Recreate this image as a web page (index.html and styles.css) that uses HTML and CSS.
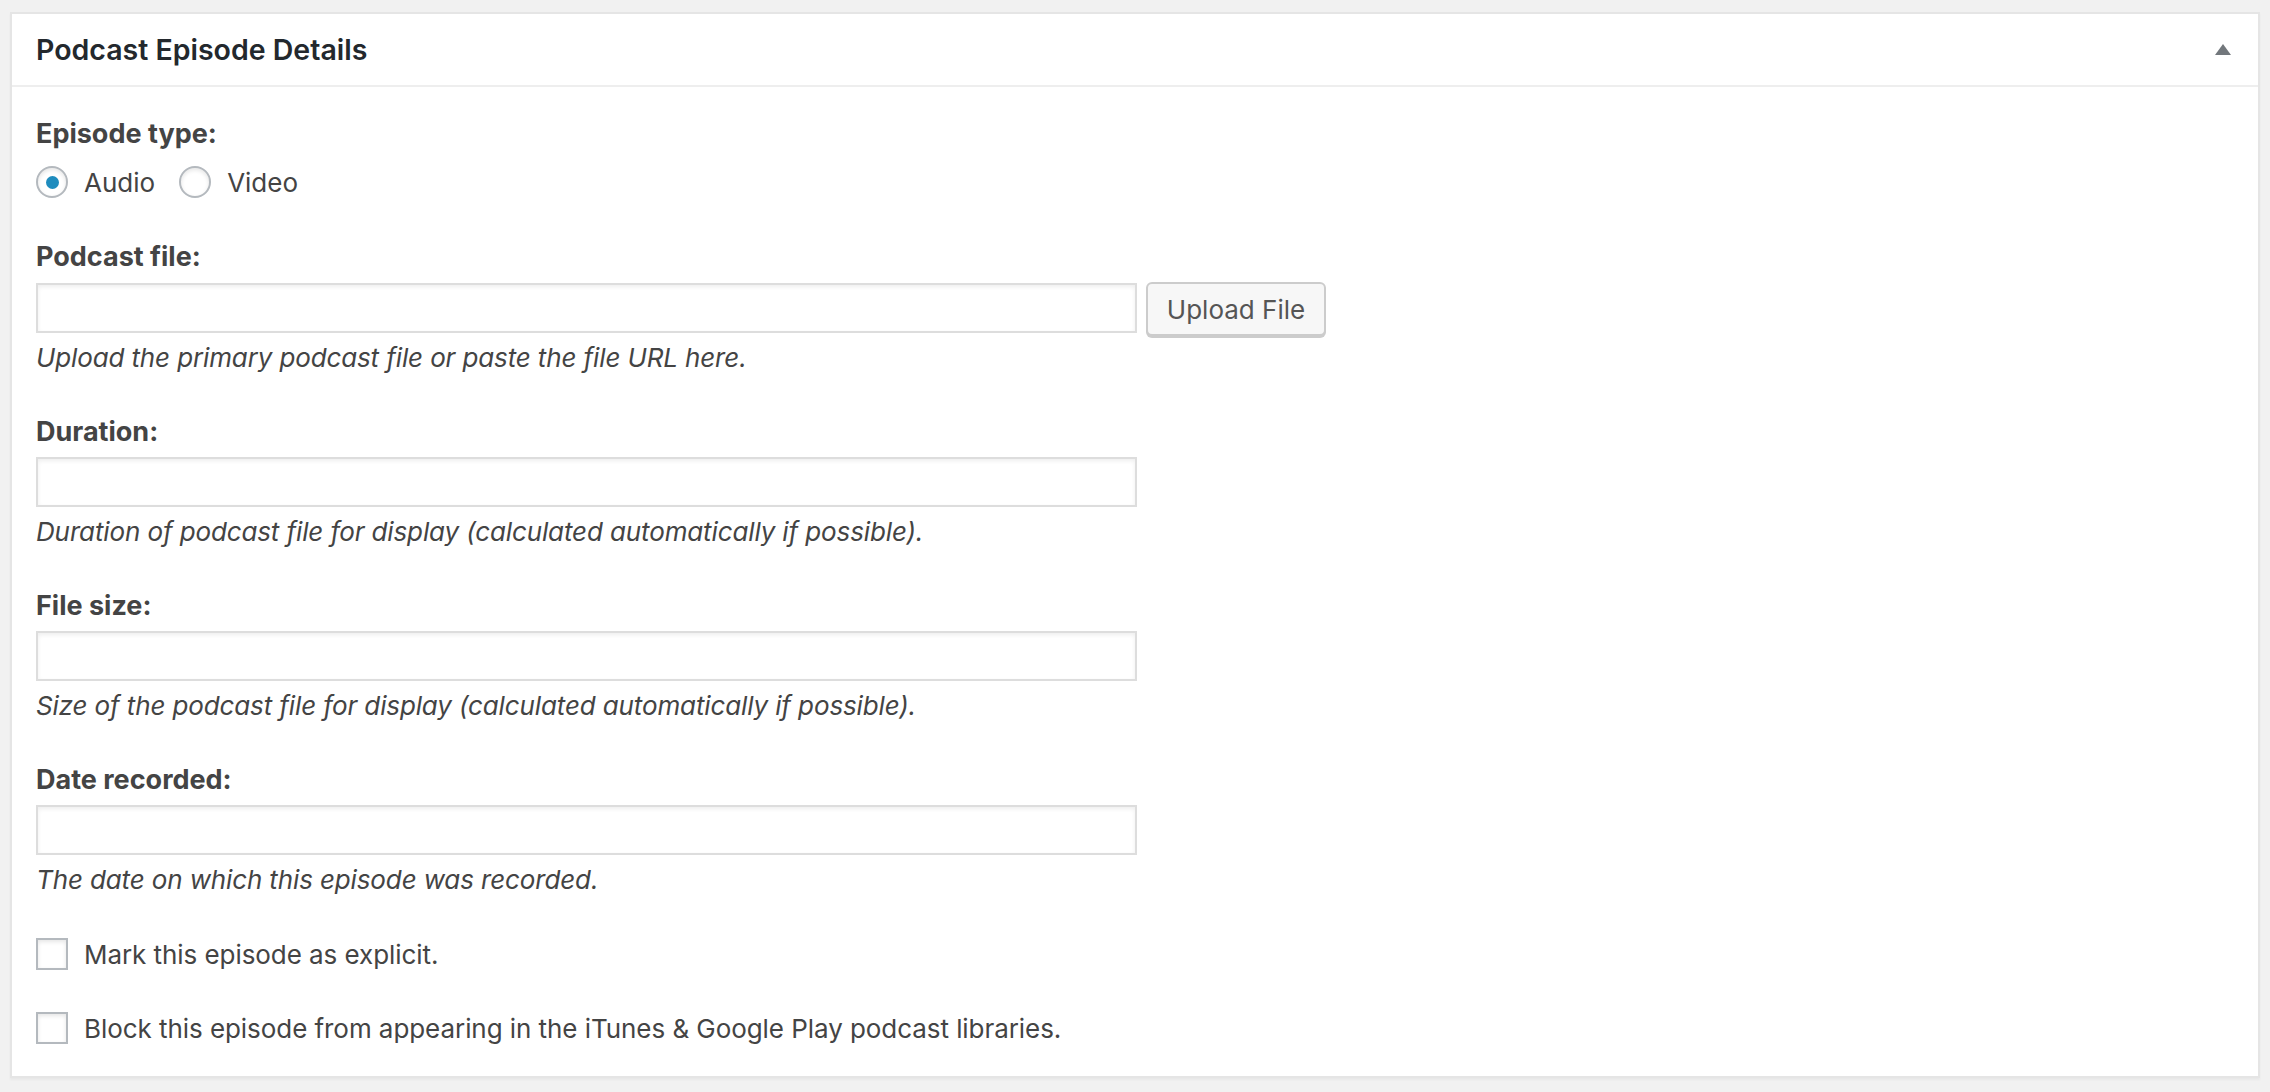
FILE: index.html
```html
<!DOCTYPE html>
<html>
<head>
<meta charset="utf-8">
<link rel="stylesheet" href="styles.css">
</head>
<body>
<div class="postbox">
  <div class="hndle">
    <h2 class="title">Podcast Episode Details</h2>
    <svg class="toggle" width="16" height="11" viewBox="0 0 16 11"><polygon points="8,0 16,11 0,11" fill="#72777c"/></svg>
  </div>
  <div class="inside">
    <div class="field first">
      <div class="label">Episode type:</div>
      <div class="radios">
        <label class="opt"><span class="radio checked"></span><span>Audio</span></label>
        <label class="opt"><span class="radio"></span><span>Video</span></label>
      </div>
    </div>
    <div class="field">
      <div class="label">Podcast file:</div>
      <div class="row upload-row">
        <div class="input"></div>
        <div class="button">Upload File</div>
      </div>
      <div class="desc">Upload the primary podcast file or paste the file URL here.</div>
    </div>
    <div class="field">
      <div class="label">Duration:</div>
      <div class="row"><div class="input"></div></div>
      <div class="desc">Duration of podcast file for display (calculated automatically if possible).</div>
    </div>
    <div class="field">
      <div class="label">File size:</div>
      <div class="row"><div class="input"></div></div>
      <div class="desc">Size of the podcast file for display (calculated automatically if possible).</div>
    </div>
    <div class="field">
      <div class="label">Date recorded:</div>
      <div class="row"><div class="input"></div></div>
      <div class="desc">The date on which this episode was recorded.</div>
    </div>
    <div class="check"><span class="checkbox"></span><span>Mark this episode as explicit.</span></div>
    <div class="check"><span class="checkbox"></span><span>Block this episode from appearing in the iTunes &amp; Google Play podcast libraries.</span></div>
  </div>
</div>
</body>
</html>
```
FILE: styles.css
```css
html, body {
  margin: 0;
  padding: 0;
  background: #f1f1f1;
}
body {
  padding: 12px 10px;
  font-family: Inter, "Noto Sans", sans-serif;
  color: #444;
  font-size: 26px;
}
.postbox {
  background: #fff;
  border: 2px solid #e5e5e5;
  box-shadow: 0 2px 2px rgba(0, 0, 0, 0.04);
}
.hndle {
  height: 71px;
  border-bottom: 2px solid #eee;
  display: flex;
  align-items: center;
  justify-content: space-between;
  padding: 0 27px 0 24px;
}
.title {
  margin: 0;
  font-size: 28.5px;
  font-weight: 600;
  color: #23282d;
  line-height: 36px;
}
.toggle {
  display: block;
}
.inside {
  padding: 29px 24px 30px 24px;
}
.field {
  margin-bottom: 38px;
}
.field.first {
  margin-bottom: 39px;
}
.label {
  font-weight: 700;
  font-size: 27px;
  line-height: 36px;
}
.radios {
  display: flex;
  align-items: center;
  height: 36px;
  margin-top: 12px;
}
.opt {
  display: flex;
  align-items: center;
  margin-right: 24px;
}
.radio {
  width: 32px;
  height: 32px;
  box-sizing: border-box;
  border: 2px solid #b4b9be;
  border-radius: 50%;
  box-shadow: inset 0 2px 4px rgba(0, 0, 0, 0.1);
  margin-right: 16px;
  display: flex;
  align-items: center;
  justify-content: center;
}
.radio.checked::after {
  content: "";
  width: 13px;
  height: 13px;
  border-radius: 50%;
  background: #1e8cbe;
}
.row {
  display: flex;
  align-items: flex-start;
  margin-top: 7px;
  margin-bottom: 7px;
}
.upload-row {
  margin-bottom: 4px;
}
.input {
  width: 1101px;
  height: 50px;
  box-sizing: border-box;
  border: 2px solid #ddd;
  box-shadow: inset 0 2px 4px rgba(0, 0, 0, 0.07);
  background: #fff;
}
.upload-row .input {
  margin-top: 1px;
}
.button {
  margin-left: 9px;
  width: 180px;
  height: 54px;
  box-sizing: border-box;
  border: 2px solid #ccc;
  border-radius: 6px;
  background: #f7f7f7;
  box-shadow: 0 2px 0 #ccc;
  color: #555;
  display: flex;
  align-items: center;
  justify-content: center;
  font-size: 26px;
}
.desc {
  font-style: italic;
  line-height: 36px;
  letter-spacing: -0.13px;
}
.check {
  display: flex;
  align-items: center;
  height: 36px;
  margin-bottom: 38px;
  letter-spacing: -0.06px;
}
.check:last-child {
  margin-bottom: 0;
}
.checkbox {
  width: 32px;
  height: 32px;
  box-sizing: border-box;
  border: 2px solid #b4b9be;
  box-shadow: inset 0 2px 4px rgba(0, 0, 0, 0.1);
  margin-right: 16px;
}
```
